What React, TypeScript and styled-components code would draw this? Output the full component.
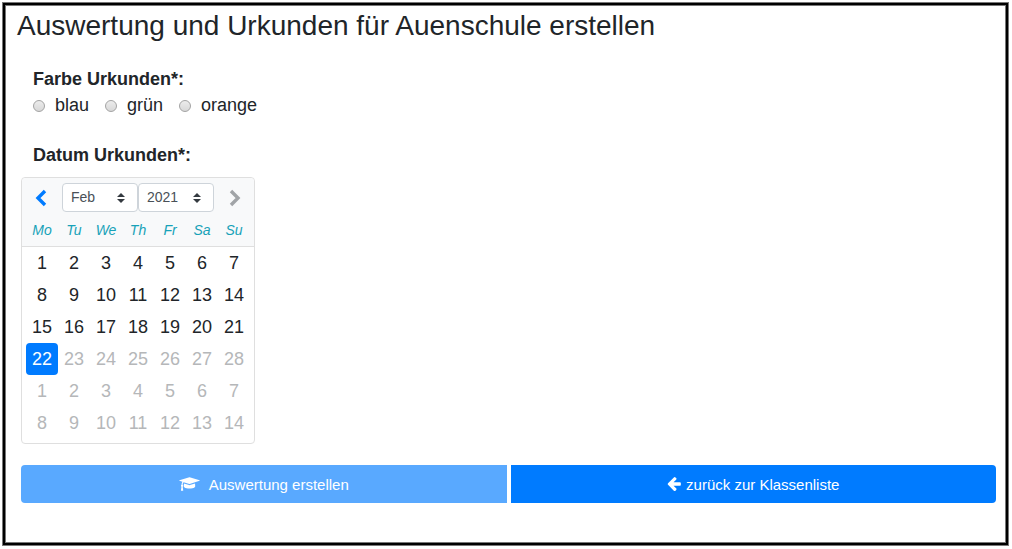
import React, { useState } from 'react';
import styled, { createGlobalStyle, css } from 'styled-components';

const GlobalStyle = createGlobalStyle`
  *, *::before, *::after { box-sizing: border-box; }
  body {
    margin: 0;
    background: #fff;
    color: #212529;
    font-family: "Liberation Sans", Arial, sans-serif;
    font-size: 18px;
    line-height: 27px;
  }
`;

const Frame = styled.main`
  display: flow-root;
  min-height: calc(100vh - 5px);
  margin: 2px 3px 3px 2px;
  padding: 6px 12px 20px 14px;
  border: 1px solid #777;
  box-shadow: inset 0 0 0 2px #000, inset 0 0 0 3px #777;
`;

const Title = styled.h1`
  margin: 0 0 23px;
  font-size: 28px;
  font-weight: 400;
  line-height: 34px;
`;

const Group = styled.fieldset`
  margin: 0 0 24px;
  padding: 0 0 0 16px;
  border: 0;
`;

const GroupTitle = styled.legend`
  padding: 0;
  font-weight: 700;
`;

const CalendarTitle = styled.h2`
  margin: 0 0 8px 16px;
  font-size: 18px;
  font-weight: 700;
`;

const Options = styled.div`
  display: flex;
  gap: 16px;
`;

const Option = styled.label`
  display: flex;
  align-items: center;
  gap: 10px;
  line-height: 25px;
`;

const Radio = styled.input`
  appearance: none;
  width: 12px;
  height: 12px;
  margin: 0;
  border: 1px solid #a3a3a3;
  border-radius: 50%;
  background: linear-gradient(#ececec, #d8d8d8);

  &:checked {
    background: radial-gradient(circle, #444 0 2px, #e2e2e2 3px);
  }
`;

const Calendar = styled.section`
  width: max-content;
  margin: 0 0 21px 4px;
  border: 1px solid #dfdfdf;
  border-radius: 4px;
`;

const CalendarNav = styled.div`
  display: flex;
  align-items: flex-start;
  justify-content: space-between;
  height: 36px;
  padding: 5px 4px 0;
  background: #f8f9fa;
  border-radius: 4px 4px 0 0;
`;

const Selects = styled.div`
  display: flex;
`;

const Arrow = styled.button`
  display: flex;
  align-items: center;
  justify-content: center;
  width: 30px;
  height: 30px;
  padding: 0;
  border: 0;
  background: none;
  color: #007bff;

  &:disabled { color: #a1a4a7; }
`;

const caret =
  "%3csvg xmlns='http://www.w3.org/2000/svg' viewBox='0 0 4 5'%3e%3cpath fill='%23343a40' d='M2 0L0 2h4zm0 5L0 3h4z'/%3e%3c/svg%3e";

const Select = styled.select`
  appearance: none;
  width: 76px;
  height: 29px;
  margin: 0;
  padding: 0 24px 2px 8px;
  border: 1px solid #ced4da;
  border-radius: 4px;
  background: #fff url("data:image/svg+xml,${caret}") no-repeat right 12px center / 8px 10px;
  color: #495057;
  font: 14px "Liberation Sans", Arial, sans-serif;
`;

const Month = styled.table`
  border-spacing: 0;
  border-collapse: separate;
`;

const edge = css`
  &:first-child { padding-left: 4px; }
  &:last-child { padding-right: 4px; }
`;

const Weekday = styled.th`
  height: 33px;
  padding: 0;
  border-bottom: 1px solid #dfdfdf;
  background: #f8f9fa;
  color: #17a2b8;
  font-size: 14px;
  font-style: italic;
  font-weight: 400;
  line-height: 32px;
  ${edge}
`;

const DayCell = styled.td`
  padding: 0;
  ${edge}

  tr:last-child > & { padding-bottom: 4px; }
`;

const Day = styled.button<{ $selected: boolean }>`
  display: block;
  width: 32px;
  height: 32px;
  padding: 0;
  border: 0;
  border-radius: 4px;
  background: ${(p) => (p.$selected ? '#007bff' : 'transparent')};
  color: ${(p) => (p.$selected ? '#fff' : '#212529')};
  font: inherit;
  line-height: 32px;

  &:disabled { color: #b5b7b9; }
`;

const Actions = styled.div`
  display: grid;
  grid-template-columns: 1fr 1fr;
  gap: 4px;
  margin-left: 4px;
`;

const Action = styled.button<{ $gap: number }>`
  display: flex;
  align-items: center;
  justify-content: center;
  gap: ${(p) => p.$gap}px;
  height: 38px;
  padding: 0 12px;
  border: 0;
  background: #007bff;
  color: #fff;
  font: 15px "Liberation Sans", Arial, sans-serif;

  &:first-child { border-radius: 4px 0 0 4px; }
  &:last-child { border-radius: 0 4px 4px 0; }
  &:disabled { background: #59a9ff; }
`;

const Chevron = ({ flip = false }: { flip?: boolean }) => (
  <svg width="12" height="18" viewBox="0 0 12 18" fill="none" stroke="currentColor" strokeWidth="3.4" aria-hidden="true">
    <path d={flip ? 'M2 2L9 9L2 16' : 'M10 2L3 9L10 16'} />
  </svg>
);

const GraduationCap = () => (
  <svg width="21" height="16" viewBox="0 0 2304 1792" fill="currentColor" aria-hidden="true">
    <path d="M1774 836l18 316q4 69-82 128t-235 93.500-323 34.500-323-34.500-235-93.500-82-128l18-316 574 181q22 7 48 7t48-7zM2304 512q0 23-22 31l-1120 352q-4 1-10 1t-10-1l-652-206q-43 34-71 111.500t-34 178.500q63 36 63 109 0 69-58 107l58 433q2 14-8 25-9 11-24 11h-192q-15 0-24-11-10-11-8-25l58-433q-58-38-58-107 0-73 65-111 11-207 98-330l-333-104q-22-8-22-31t22-31l1120-352q4-1 10-1t10 1l1120 352q22 8 22 31z" />
  </svg>
);

const ArrowLeft = () => (
  <svg width="14" height="16" viewBox="0 128 1536 1792" fill="currentColor" aria-hidden="true">
    <path d="M1536 960v128q0 53-32.500 90.500t-84.500 37.500h-704l293 294q38 36 38 90t-38 90l-75 76q-37 37-90 37-52 0-91-37l-651-652q-37-37-37-90 0-52 37-91l651-650q38-38 91-38 52 0 90 38l75 74q38 38 38 91t-38 91l-293 293h704q52 0 84.500 37.500t32.500 90.500z" />
  </svg>
);

const colours = ['blau', 'grün', 'orange'];
const weekdays = ['Mo', 'Tu', 'We', 'Th', 'Fr', 'Sa', 'Su'];
const months = ['Jan', 'Feb'];
const years = ['2020', '2021'];
const lastDay = 22;
const weeks = Array.from({ length: 6 }, (_, w) => Array.from({ length: 7 }, (_, d) => w * 7 + d + 1));

export default function App() {
  const [selected, setSelected] = useState(lastDay);

  return (
    <>
      <GlobalStyle />
      <Frame>
        <Title>Auswertung und Urkunden für Auenschule erstellen</Title>
        <Group>
          <GroupTitle>Farbe Urkunden*:</GroupTitle>
          <Options>
            {colours.map((c) => (
              <Option key={c}>
                <Radio type="radio" name="farbe" value={c} />
                {c}
              </Option>
            ))}
          </Options>
        </Group>
        <CalendarTitle id="datum">Datum Urkunden*:</CalendarTitle>
        <Calendar aria-labelledby="datum">
          <CalendarNav>
            <Arrow type="button" aria-label="Previous month"><Chevron /></Arrow>
            <Selects>
              <Select aria-label="Select month" defaultValue="Feb">
                {months.map((m) => <option key={m}>{m}</option>)}
              </Select>
              <Select aria-label="Select year" defaultValue="2021">
                {years.map((y) => <option key={y}>{y}</option>)}
              </Select>
            </Selects>
            <Arrow type="button" aria-label="Next month" disabled><Chevron flip /></Arrow>
          </CalendarNav>
          <Month>
            <thead>
              <tr>{weekdays.map((d) => <Weekday key={d} scope="col">{d}</Weekday>)}</tr>
            </thead>
            <tbody>
              {weeks.map((week) => (
                <tr key={week[0]}>
                  {week.map((n) => (
                    <DayCell key={n}>
                      <Day type="button" $selected={n === selected} disabled={n > lastDay} onClick={() => setSelected(n)}>
                        {n > 28 ? n - 28 : n}
                      </Day>
                    </DayCell>
                  ))}
                </tr>
              ))}
            </tbody>
          </Month>
        </Calendar>
        <Actions>
          <Action type="button" disabled $gap={9}>
            <GraduationCap />
            Auswertung erstellen
          </Action>
          <Action type="button" $gap={5}>
            <ArrowLeft />
            zurück zur Klassenliste
          </Action>
        </Actions>
      </Frame>
    </>
  );
}
